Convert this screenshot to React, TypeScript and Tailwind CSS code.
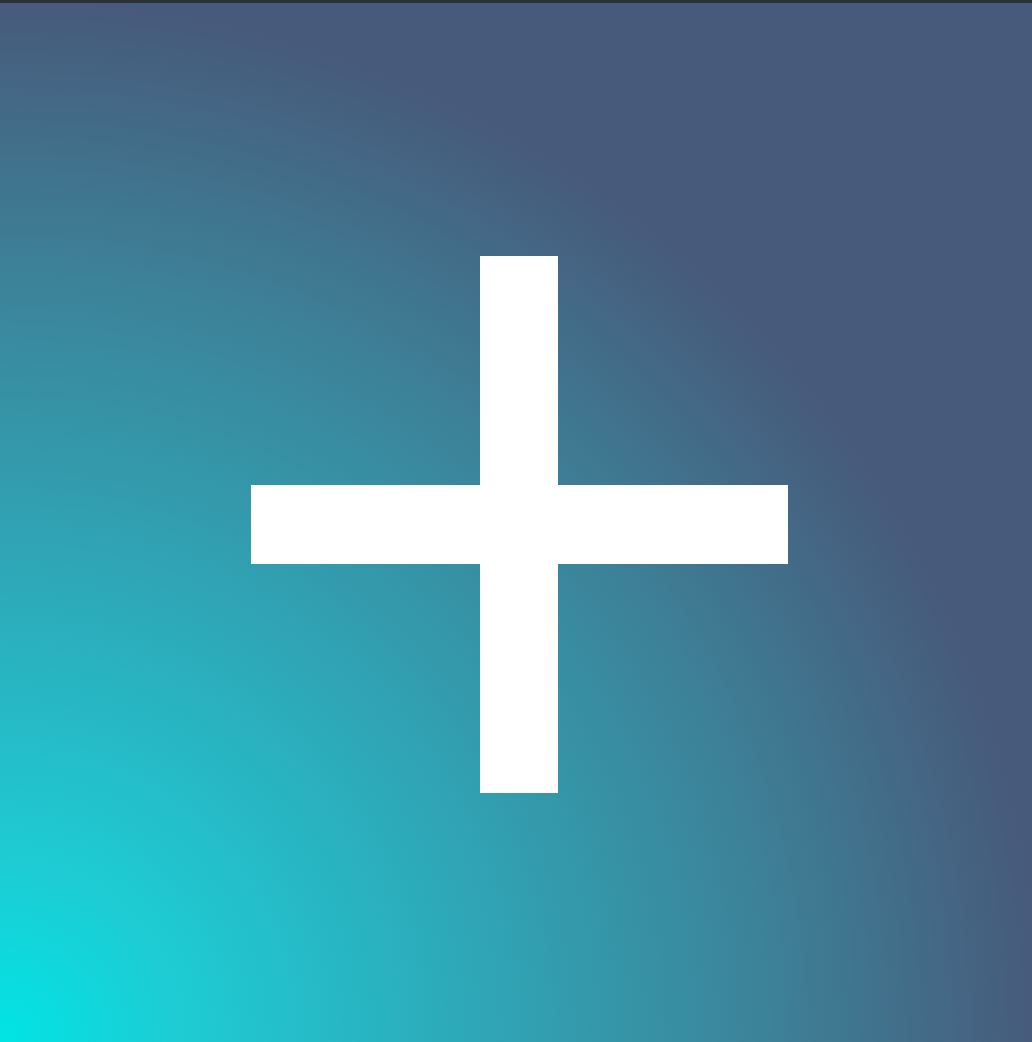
import React from 'react';

export default function App() {
  return (
    <div className="flex h-[1042px] w-full flex-col overflow-hidden bg-[#475a7b]">
      <div className="h-[3px] w-full bg-[#2b2f38]" />
      <div className="flex flex-1 items-center justify-center bg-[radial-gradient(circle_at_0%_100%,#00e4e4_0px,#1dcdd5_170px,#2ea8b8_470px,#3c8399_760px,#475a7b_1040px)] pl-[7px] pt-[4px]">
        <svg width="537" height="537" viewBox="0 0 537 537">
          <rect x="229" y="0" width="78" height="537" fill="#ffffff" />
          <rect x="0" y="229" width="537" height="79" fill="#ffffff" />
        </svg>
      </div>
    </div>
  );
}
